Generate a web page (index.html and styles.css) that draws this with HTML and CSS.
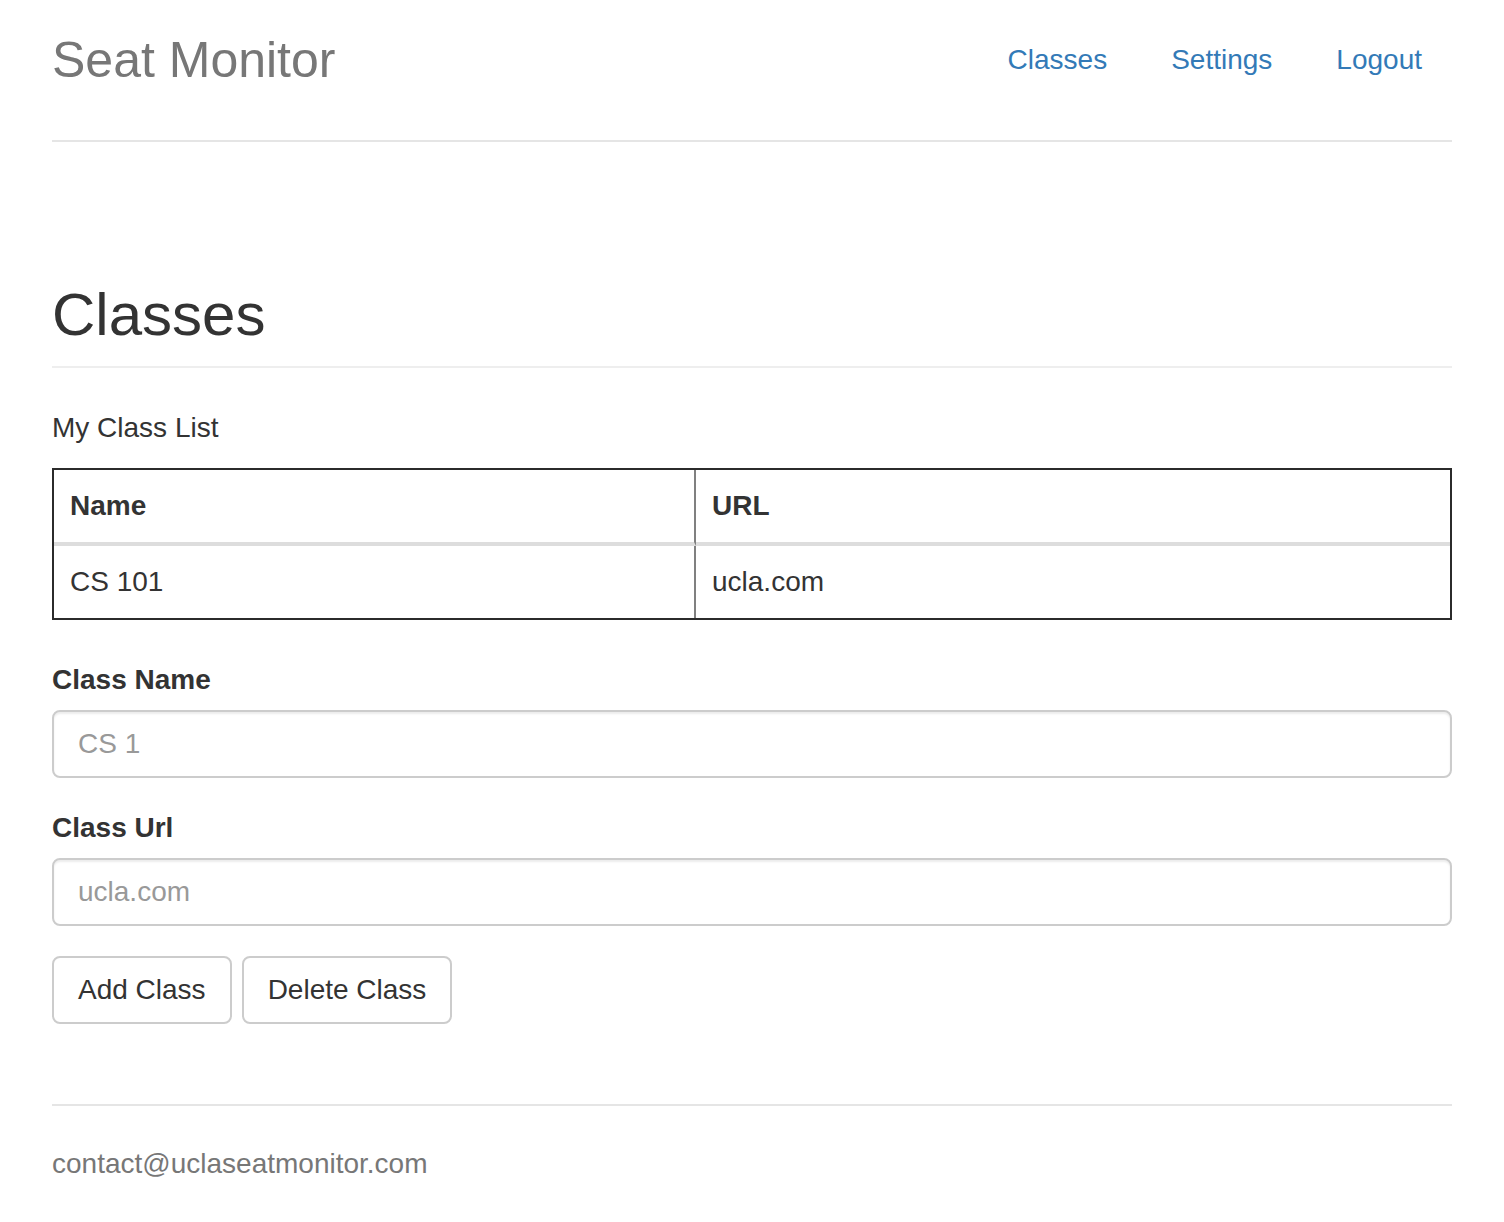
FILE: index.html
```html
<!DOCTYPE html>
<html lang="en">
<head>
<meta charset="utf-8">
<title>Seat Monitor</title>
<link rel="stylesheet" href="styles.css">
</head>
<body>
<div class="container">
  <header class="header">
    <h3 class="brand">Seat Monitor</h3>
    <nav class="nav">
      <a class="nav-link" href="#">Classes</a>
      <a class="nav-link" href="#">Settings</a>
      <a class="nav-link" href="#">Logout</a>
    </nav>
  </header>

  <main class="main">
    <div class="page-header">
      <h1 class="page-title">Classes</h1>
    </div>
    <p class="lead-text">My Class List</p>
    <table class="class-table">
      <colgroup>
        <col class="col-name">
        <col>
      </colgroup>
      <thead>
        <tr><th>Name</th><th>URL</th></tr>
      </thead>
      <tbody>
        <tr><td>CS 101</td><td>ucla.com</td></tr>
      </tbody>
    </table>

    <form class="class-form">
      <div class="form-group">
        <label class="form-label" for="cname">Class Name</label>
        <input class="form-control" id="cname" type="text" placeholder="CS 1">
      </div>
      <div class="form-group">
        <label class="form-label" for="curl">Class Url</label>
        <input class="form-control" id="curl" type="text" placeholder="ucla.com">
      </div>
      <div class="btn-row">
        <button type="button" class="btn">Add Class</button>
        <button type="button" class="btn">Delete Class</button>
      </div>
    </form>
  </main>

  <footer class="footer">
    <p class="footer-text">contact@uclaseatmonitor.com</p>
  </footer>
</div>
</body>
</html>
```

FILE: styles.css
```css
* { box-sizing: border-box; }

html, body {
  margin: 0;
  padding: 0;
  background: #fff;
}

body {
  font-family: "Liberation Sans", Arial, sans-serif;
  font-size: 28px;
  line-height: 40px;
  color: #333;
}

.container {
  padding: 20px 52px 0;
}

.header {
  display: flex;
  justify-content: space-between;
  align-items: center;
  padding-bottom: 40px;
  border-bottom: 2px solid #e5e5e5;
}

.brand {
  margin: 0;
  font-size: 50px;
  line-height: 80px;
  font-weight: 500;
  color: #777;
}

.nav {
  display: flex;
}

.nav-link {
  display: block;
  padding: 20px 30px;
  margin-left: 4px;
  color: #337ab7;
  text-decoration: none;
  font-size: 28px;
  line-height: 40px;
}

.page-header {
  margin-top: 140px;
  padding-bottom: 18px;
  border-bottom: 2px solid #eee;
  margin-bottom: 40px;
}

.page-title {
  margin: 0;
  font-size: 60px;
  line-height: 66px;
  font-weight: 500;
  color: #333;
}

.lead-text {
  margin: 0 0 20px;
}

.class-table {
  width: 100%;
  table-layout: fixed;
  border-collapse: separate;
  border-spacing: 0;
  border: 2px solid #2b2b2b;
  margin-bottom: 40px;
}

.col-name { width: 642px; }

.class-table th,
.class-table td {
  padding: 16px;
  text-align: left;
  line-height: 40px;
  vertical-align: top;
}

.class-table th {
  font-weight: bold;
  border-bottom: 4px solid #ddd;
}

.class-table th:first-child,
.class-table td:first-child {
  border-right: 2px solid #808080;
}

.form-group {
  margin-bottom: 30px;
}

.form-label {
  display: inline-block;
  margin-bottom: 10px;
  font-weight: bold;
}

.form-control {
  display: block;
  width: 100%;
  height: 68px;
  padding: 12px 24px;
  font-family: inherit;
  font-size: 28px;
  line-height: 40px;
  color: #555;
  background: #fff;
  border: 2px solid #ccc;
  border-radius: 8px;
  box-shadow: inset 0 2px 2px rgba(0, 0, 0, 0.075);
  outline: none;
}

.form-control::placeholder {
  color: #999;
}

.btn-row {
  display: flex;
  gap: 10px;
}

.btn {
  display: inline-block;
  height: 68px;
  padding: 12px 24px;
  font-family: inherit;
  font-size: 28px;
  line-height: 40px;
  color: #333;
  background: #fff;
  border: 2px solid #ccc;
  border-radius: 8px;
  cursor: pointer;
}

.footer {
  margin-top: 80px;
  padding-top: 38px;
  border-top: 2px solid #e5e5e5;
}

.footer-text {
  margin: 0;
  color: #777;
}
```
